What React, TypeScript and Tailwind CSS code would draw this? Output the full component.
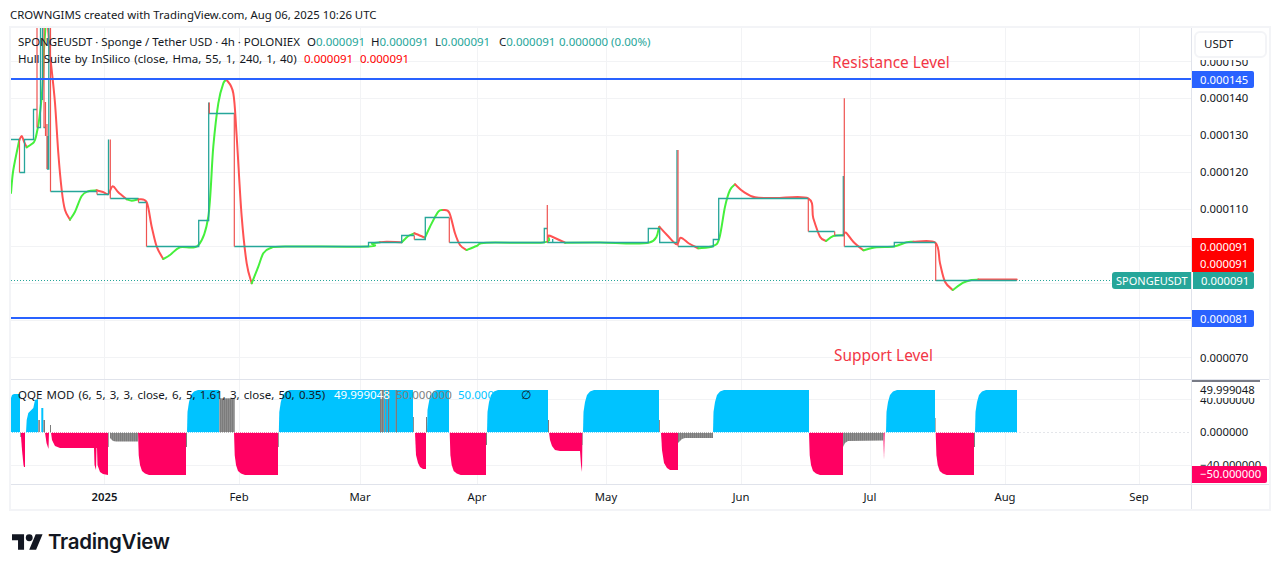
import React from "react";

type P = [number, number];

function smooth(pts: P[]): string {
  let d = `M${pts[0][0]} ${pts[0][1]}`;
  for (let i = 0; i < pts.length - 1; i++) {
    const p0 = pts[Math.max(i - 1, 0)];
    const p1 = pts[i];
    const p2 = pts[i + 1];
    const p3 = pts[Math.min(i + 2, pts.length - 1)];
    const c1x = p1[0] + (p2[0] - p0[0]) / 6;
    const c1y = p1[1] + (p2[1] - p0[1]) / 6;
    const c2x = p2[0] - (p3[0] - p1[0]) / 6;
    const c2y = p2[1] - (p3[1] - p1[1]) / 6;
    d += `C${c1x.toFixed(1)} ${c1y.toFixed(1)} ${c2x.toFixed(1)} ${c2y.toFixed(1)} ${p2[0]} ${p2[1]}`;
  }
  return d;
}

const GREEN = "#45f03c";
const RED = "#ff5252";
const TEAL = "#26a69a";
const STEP_RED = "#ef5350";

const hull: { c: string; p: P[] }[] = [
  { c: GREEN, p: [[11, 193], [13.3, 170], [19.3, 140]] },
  { c: RED, p: [[19.3, 140], [21.7, 136], [24, 141.7], [26.7, 147.3]] },
  { c: GREEN, p: [[26.7, 147.3], [31.7, 144], [35, 140], [38.3, 125], [40.7, 106.7], [42.7, 83], [44, 50], [45.5, 27]] },
  { c: RED, p: [[48, 27], [50, 55], [51.7, 70], [55, 103], [58.3, 153], [61.7, 190], [65, 210], [70, 219.7]] },
  { c: GREEN, p: [[70, 219.7], [75, 211.7], [81.7, 196], [88.3, 191.3], [96.7, 190.3]] },
  { c: RED, p: [[96.7, 190.3], [103, 192], [108.3, 194], [112.7, 186.3], [118.3, 192.3], [126.7, 199.3]] },
  { c: GREEN, p: [[126.7, 199.3], [131.7, 200.7], [138.3, 199.3]] },
  { c: RED, p: [[138.3, 199.3], [146.7, 202.3], [151.7, 226.7], [156.7, 246.7], [163.3, 259]] },
  { c: GREEN, p: [[163.3, 259], [170, 255], [180, 247.3], [198.3, 245.3], [208.3, 216.7], [213.3, 146.7], [218.3, 103.3], [223.3, 83.3], [226.7, 80]] },
  { c: RED, p: [[226.7, 80], [233.3, 93.3], [236.7, 136.7], [241.7, 216.7], [246.7, 263.3], [251.7, 283.3]] },
  { c: GREEN, p: [[251.7, 283.3], [258.3, 266.7], [263.3, 253.3], [270, 248.3], [285, 246.6], [368, 246.5], [372, 243.5], [380, 242.2]] },
  { c: RED, p: [[380, 242.2], [386.7, 241.8], [401.7, 242.3]] },
  { c: GREEN, p: [[401.7, 242.3], [408.3, 236], [414.3, 233.3]] },
  { c: RED, p: [[414.3, 233.3], [425, 237.7]] },
  { c: GREEN, p: [[425, 237.7], [430, 226.7], [438.3, 211.7], [443.3, 210]] },
  { c: RED, p: [[443.3, 210], [449.3, 212.7], [455, 233.3], [460, 245], [466.7, 250]] },
  { c: GREEN, p: [[466.7, 250], [476.7, 246], [486.7, 242.7], [543, 242.5], [548.3, 236.7]] },
  { c: RED, p: [[548.3, 236.7], [550, 235.7], [565, 242.7]] },
  { c: GREEN, p: [[565, 242.7], [600, 242.5], [649.3, 242.5], [659.3, 226.7]] },
  { c: RED, p: [[659.3, 226.7], [668, 236], [676.7, 244.3], [680.7, 237.7], [689, 243.5], [698.3, 248.3]] },
  { c: GREEN, p: [[698.3, 248.3], [713.3, 246], [719.3, 238.3], [725, 206.7], [730, 190], [735, 184.3]] },
  { c: RED, p: [[735, 184.3], [743.3, 191.7], [755, 197.3], [775, 198], [808.3, 198.3], [813.3, 218.3], [820, 236.7], [826, 241]] },
  { c: GREEN, p: [[826, 241], [833.3, 236], [843.3, 235.3]] },
  { c: RED, p: [[843.3, 235.3], [846, 232.7], [853.3, 241.7], [863.3, 250.3]] },
  { c: GREEN, p: [[863.3, 250.3], [876.7, 247.3], [894, 246.5], [906.7, 242.2], [913.3, 241.8]] },
  { c: RED, p: [[913.3, 241.8], [935.3, 242.7], [940, 263.3], [945, 281.7], [952.7, 290]] },
  { c: GREEN, p: [[952.7, 290], [963.3, 282.7], [971.7, 280], [978.3, 279.6]] },
  { c: RED, p: [[978.3, 279.6], [1016.7, 279.6]] },
];

const tealStep =
  "M11 139.5H19.5M19.5 172.5H24.5V139.5H33.5V109.5H37M37 127.5H40.5V27M42.5 27V100M43.5 127.5H45.5M47.5 136V169H48.8V27M50.5 191.5H97M97 194.5H108.5V139.5M110.3 198.5H138.5M138.5 202.5H146.5M146.5 246.5H198.7V220.5H208.7V102.5M209.3 113.5H234.3M234.3 246.5H368.5V242.5H401.7V235.5H414.3M414.3 239.5H425.3V217.5H449.3M449.3 242.5H544.3V228.5H547.3M547.3 242.5H648.3V228.5H659.7V242.5H677V150M678 246.5H713.3V239.5H718.7V198.5H808.3M808.3 231.5H834.7M834.7 235.5H843.3V176M844.3 246.5H894.3V242.5H935.7M935.7 280.5H1016.7M552.7 242.5V239";
const redStep =
  "M19.5 139.5V172.5M37 27V127.5M44 27V127.5M45.5 102V136M47 124V169M50.5 27V191.5M97 191.5V194.5M110.3 139.5V198.5M138.5 198.5V202.5M146.5 202.5V246.5M209.3 102.5V113.5M234.3 113.5V246.5M414.3 235.5V239.5M449.3 217.5V242.5M547.3 205V242.5M678 150V246.5M808.3 198.5V231.5M834.7 231.5V235.5M844.3 98.3V246.5M935.7 242.5V280.5";

const poly = (pts: P[]) => pts.map((p) => p.join(",")).join(" ");
const blueRise = (x0: number, x1: number): P[] => [
  [x0, 432.5], [x0 + 0.5, 412], [x0 + 2, 402], [x0 + 4, 395], [x0 + 7, 391.5], [x0 + 11, 390], [x1, 390], [x1, 432.5],
];
const pinkFall = (x0: number, x1: number, b = 475): P[] => [
  [x0, 432.5], [x0 + 0.7, 455], [x0 + 2, 465], [x0 + 4, 471], [x0 + 7, b - 1.5], [x0 + 11, b], [x1, b], [x1, 432.5],
];

const blueShapes: P[][] = [
  [[11, 432.5], [11, 398], [12, 395], [14, 394], [20, 394], [20, 432.5]],
  [[26, 432.5], [26.7, 420], [28.3, 413], [33.3, 408], [35, 400], [38, 399], [38, 432.5]],
  [[41.3, 432.5], [41.3, 408], [43.3, 408], [43.3, 432.5]],
  blueRise(187, 219.3),
  blueRise(278.8, 413),
  [[427, 432.5], [427.5, 410], [430, 396], [434, 391], [437, 390], [449, 390], [449, 432.5]],
  blueRise(487, 548),
  blueRise(583, 659),
  blueRise(713, 809),
  blueRise(886, 935),
  blueRise(975, 1017),
];
const pinkShapes: P[][] = [
  [[20.7, 432.5], [22, 450], [23.5, 465], [24, 467], [25, 467], [25, 432.5]],
  [[45, 432.5], [46.5, 443], [48.5, 449], [49, 432.5]],
  [[51, 432.5], [52, 440], [55, 446], [60, 448], [94, 448], [94.5, 465], [96, 470], [96.5, 448], [97, 448], [97.5, 465], [100, 472], [103, 474], [108, 475], [108, 432.5]],
  pinkFall(138, 186),
  pinkFall(234, 278),
  [[415, 432.5], [416, 455], [418, 463], [420, 467], [423, 469], [426, 469], [426, 432.5]],
  pinkFall(449.7, 486),
  [[549, 432.5], [550, 440], [552, 446], [555, 450], [560, 451], [580, 451], [581, 465], [582, 472], [582.5, 432.5]],
  [[661, 432.5], [662, 450], [664, 463], [667, 468], [670, 470], [678, 470], [678, 432.5]],
  pinkFall(809, 843),
  [[883.3, 432.5], [884, 460], [884.7, 432.5]],
  pinkFall(935.7, 974),
];
const grayShapes: P[][] = [
  [[20, 432.5], [20, 437], [20.7, 437], [20.7, 432.5]],
  [[38.3, 432.5], [38.3, 420], [40, 420], [40, 432.5]],
  [[43.3, 432.5], [43.3, 420], [45, 420], [45, 432.5]],
  [[50, 432.5], [50, 425], [51, 425], [51, 432.5]],
  [[108.3, 432.5], [108.3, 447], [109, 447], [109, 432.5]],
  [[110, 432.5], [110, 438], [113, 441], [116, 441.5], [138, 441.5], [138, 432.5]],
  [[186, 432.5], [186, 447], [187, 447], [187, 432.5]],
  [[219.3, 432.5], [219.3, 398.3], [234.7, 398.3], [234.7, 432.5]],
  [[278, 432.5], [278, 447], [278.8, 447], [278.8, 432.5]],
  [[380, 432.5], [380, 390], [384, 390], [384, 432.5]],
  [[385, 432.5], [385, 390], [386.3, 390], [386.3, 432.5]],
  [[388, 432.5], [388, 390], [389.3, 390], [389.3, 432.5]],
  [[395.5, 432.5], [395.5, 390], [397, 390], [397, 432.5]],
  [[413, 432.5], [413, 417], [414, 417], [414, 432.5]],
  [[426, 432.5], [426, 417], [427, 417], [427, 432.5]],
  [[486, 432.5], [486, 445], [487, 445], [487, 432.5]],
  [[548, 432.5], [548, 420], [549, 420], [549, 432.5]],
  [[582.5, 432.5], [582.5, 445], [583, 445], [583, 432.5]],
  [[659, 432.5], [659, 420], [660, 420], [660, 432.5]],
  [[678, 432.5], [678, 443], [682, 439], [685, 438], [713, 438], [713, 432.5]],
  [[843, 432.5], [843, 447], [845, 443], [848, 441], [883.3, 440.5], [883.3, 432.5]],
  [[935, 432.5], [935, 418], [935.7, 418], [935.7, 432.5]],
  [[974, 432.5], [974, 447], [975, 447], [975, 432.5]],
];

const vGrid = [104.5, 239.5, 360.5, 477.5, 606.5, 741.5, 870.5, 1005.5, 1139.5];
const hGrid = [61.5, 98.5, 135.5, 172.5, 209.5, 246.5, 283.5, 320.5, 357.5];

const priceTicks = [
  { t: "0.000150", y: 61 },
  { t: "0.000140", y: 97.5 },
  { t: "0.000130", y: 134.5 },
  { t: "0.000120", y: 171.5 },
  { t: "0.000110", y: 208.5 },
  { t: "0.000070", y: 357 },
];
const timeLabels = [
  { t: "2025", x: 104.5, b: true },
  { t: "Feb", x: 239 },
  { t: "Mar", x: 360 },
  { t: "Apr", x: 477 },
  { t: "May", x: 606 },
  { t: "Jun", x: 741 },
  { t: "Jul", x: 870 },
  { t: "Aug", x: 1005 },
  { t: "Sep", x: 1139 },
];

function TradingViewMark() {
  return (
    <svg width="31" height="16" viewBox="0 4 36 18" fill="#131722">
      <path d="M14 22H7V11H0V4h14v18zM28 22h-8l7.5-18h8L28 22z" />
      <circle cx="20" cy="8" r="4" />
    </svg>
  );
}

export default function App() {
  return (
    <div className="w-[1281px] h-[571px] bg-white overflow-hidden text-[#131722] font-['Noto_Sans',sans-serif] text-[11.3px] leading-none">
      <div className="h-[26px] pl-[10px] pt-[8px] text-[11.4px] leading-[13px] whitespace-nowrap">
        CROWNGIMS created with TradingView.com, Aug 06, 2025 10:26 UTC
      </div>

      <div className="ml-[9px] w-[1262px] h-[485px] border-2 border-[#f3f4f7] flex flex-col">
        {/* price pane */}
        <div className="h-[351px] flex relative">
          <div className="w-[1180px] relative overflow-hidden">
            <svg width="1180" height="351" viewBox="11 28 1180 351" className="block">
              <g stroke="#f2f3f5" strokeWidth="1">
                {vGrid.map((x) => (
                  <line key={x} x1={x} x2={x} y1="28" y2="379" />
                ))}
                {hGrid.map((y) => (
                  <line key={y} x1="11" x2="1191" y1={y} y2={y} />
                ))}
              </g>
              <line x1="11" x2="1112" y1="280.5" y2="280.5" stroke={TEAL} strokeWidth="1" strokeDasharray="1 2" />
              {hull.map((s, i) => (
                <path key={i} d={smooth(s.p)} fill="none" stroke={s.c} strokeWidth="2" strokeLinecap="round" />
              ))}
              <path d={tealStep} fill="none" stroke={TEAL} strokeWidth="1.3" />
              <path d={redStep} fill="none" stroke={STEP_RED} strokeWidth="1.2" />
              <line x1="11" x2="1191" y1="79" y2="79" stroke="#2962ff" strokeWidth="2" />
              <line x1="11" x2="1191" y1="318" y2="318" stroke="#2962ff" strokeWidth="2" />
            </svg>

            <div className="absolute left-[7px] top-[7px] flex flex-col gap-[4px] whitespace-nowrap text-[11.5px] leading-[13px]">
              <div className="flex">
                <span className="w-[289px] tracking-[-0.05px]">SPONGEUSDT · Sponge / Tether USD · 4h · POLONIEX</span>
                <span className="w-[64px]">O<span className="text-[#26a69a]">0.000091</span></span>
                <span className="w-[64px]">H<span className="text-[#26a69a]">0.000091</span></span>
                <span className="w-[64px]">L<span className="text-[#26a69a]">0.000091</span></span>
                <span className="w-[60px]">C<span className="text-[#26a69a]">0.000091</span></span>
                <span className="text-[#26a69a]">0.000000 (0.00%)</span>
              </div>
              <div className="flex">
                <span className="w-[286px] [word-spacing:1.1px]">Hull Suite by InSilico (close, Hma, 55, 1, 240, 1, 40)</span>
                <span className="w-[56px] text-[#ff0000]">0.000091</span>
                <span className="text-[#ff0000]">0.000091</span>
              </div>
            </div>

            <div className="absolute left-[821px] top-[26px] text-[15.4px] leading-[18px] text-[#f23645] whitespace-nowrap">Resistance Level</div>
            <div className="absolute left-[823px] top-[319px] text-[15.4px] leading-[18px] text-[#f23645] whitespace-nowrap">Support Level</div>
            <div className="absolute right-0 top-[244px] h-[17px] w-[79px] bg-[#26a69a] rounded-l-[3px] text-white text-[11px] leading-[17px] pl-[4px]">SPONGEUSDT</div>
          </div>

          <div className="flex-1 border-l border-[#e0e3eb] relative overflow-hidden">
            {priceTicks.map((p) => (
              <div key={p.t} className="absolute left-[8px] leading-[17px] h-[17px]" style={{ top: p.y - 28 - 8.5 }}>
                {p.t}
              </div>
            ))}
            <div className="absolute left-0 right-0 top-0 h-[32px] bg-white pl-[2px] pr-[2px] pt-[3px]">
              <div className="h-[27px] border-2 border-[#f3f4f7] rounded-[6px] pl-[8px] leading-[21px] text-[11.5px]">USDT</div>
            </div>
            <div className="absolute left-0 top-[43px] w-[62px] h-[17px] bg-[#2962ff] text-white pl-[8px] leading-[17px] rounded-r-[2px]">0.000145</div>
            <div className="absolute left-0 top-[210px] w-[62px] h-[34px] bg-[#ff0000] text-white pl-[8px] leading-[17px] rounded-r-[2px]">
              <div>0.000091</div>
              <div>0.000091</div>
            </div>
            <div className="absolute left-0 top-[244px] w-[62px] h-[17px] bg-[#26a69a] text-white pl-[8px] leading-[17px] rounded-r-[2px] border-l border-white">0.000091</div>
            <div className="absolute left-0 top-[282px] w-[62px] h-[17px] bg-[#2962ff] text-white pl-[8px] leading-[17px] rounded-r-[2px]">0.000081</div>
          </div>
        </div>

        {/* indicator pane */}
        <div className="h-[105px] flex border-t border-[#e0e3eb]">
          <div className="w-[1180px] relative overflow-hidden">
            <svg width="1180" height="104" viewBox="11 380 1180 104" className="block">
              <defs>
                <pattern id="grayStripes" width="2" height="4" patternUnits="userSpaceOnUse">
                  <rect width="2" height="4" fill="#8f8f8f" />
                  <rect width="1" height="4" fill="#7c7c7c" />
                </pattern>
              </defs>
              <g stroke="#f2f3f5" strokeWidth="1">
                {vGrid.map((x) => (
                  <line key={x} x1={x} x2={x} y1="380" y2="484" />
                ))}
                <line x1="11" x2="1191" y1="399.5" y2="399.5" />
                <line x1="11" x2="1191" y1="465.5" y2="465.5" />
              </g>
              <line x1="11" x2="1191" y1="432.5" y2="432.5" stroke="#e4e6ea" strokeWidth="1" strokeDasharray="2 2" />
              {blueShapes.map((s, i) => (
                <polygon key={i} points={poly(s)} fill="#00c3ff" />
              ))}
              {pinkShapes.map((s, i) => (
                <polygon key={i} points={poly(s)} fill="#ff0062" />
              ))}
              {grayShapes.map((s, i) => (
                <polygon key={i} points={poly(s)} fill="url(#grayStripes)" />
              ))}
              <line x1="11" x2="1017" y1="432.5" y2="432.5" stroke="#ffffff" strokeWidth="1" strokeDasharray="1 1" />
            </svg>
            <div className="absolute left-[7px] top-[8px] h-[13px] w-[540px] text-[11.5px] leading-[13px] whitespace-nowrap">
              <span className="absolute left-0 [word-spacing:1.2px]">QQE MOD (6, 5, 3, 3, close, 6, 5, 1.61, 3, close, 50, 0.35)</span>
              <span className="absolute left-[316px] text-white">49.999048</span>
              <span className="absolute left-[378px] text-[#808080]">50.000000</span>
              <span className="absolute left-[440px] text-[#00c3ff]">50.000000</span>
              <span className="absolute left-[503px]">∅</span>
            </div>
          </div>
          <div className="flex-1 border-l border-[#e0e3eb] relative overflow-hidden">
            <div className="absolute left-[8px] top-[11px] h-[17px] leading-[17px]">40.000000</div>
            <div className="absolute left-[8px] top-[43px] h-[17px] leading-[17px]">0.000000</div>
            <div className="absolute left-[8px] top-[76px] h-[17px] leading-[17px]">−40.000000</div>
            <div className="absolute left-0 top-0 w-[68px] h-[18px] bg-white border-t-2 border-[#787b86] pl-[8px] leading-[15px]">49.999048</div>
            <div className="absolute left-0 top-[86px] w-[75px] h-[17px] bg-[#ff0062] text-white pl-[8px] leading-[16px] rounded-r-[2px]">−50.000000</div>
          </div>
        </div>

        {/* time axis */}
        <div className="flex-1 flex border-t border-[#e0e3eb]">
          <div className="w-[1180px] relative">
            {timeLabels.map((l) => (
              <span
                key={l.t}
                className={l.b ? "absolute top-[5px] -translate-x-1/2 font-semibold leading-[13px]" : "absolute top-[5px] -translate-x-1/2 leading-[13px]"}
                style={{ left: l.x - 11 }}
              >
                {l.t}
              </span>
            ))}
          </div>
          <div className="flex-1 border-l border-[#e0e3eb]" />
        </div>
      </div>

      <div className="pl-[12px] pt-[20px] flex items-center gap-[5px]">
        <TradingViewMark />
        <span className="font-['Inter',sans-serif] font-semibold text-[20.5px] leading-[22px] tracking-[-0.3px] text-[#131722]">TradingView</span>
      </div>
    </div>
  );
}
